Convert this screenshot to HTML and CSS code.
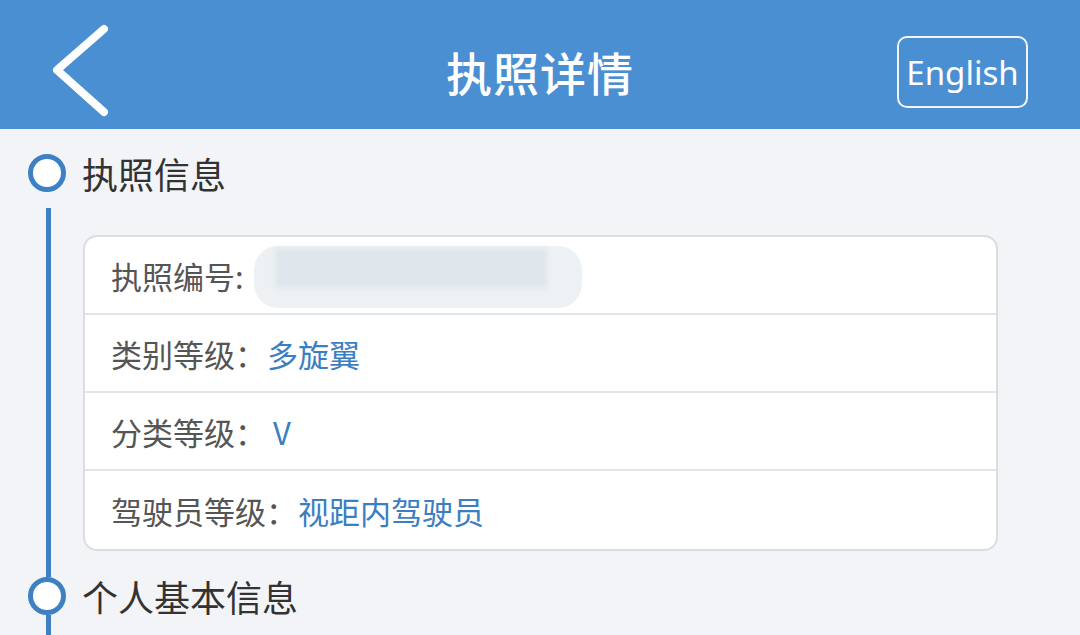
FILE: index.html
```html
<!DOCTYPE html>
<html lang="zh-CN">
<head>
<meta charset="utf-8">
<title>执照详情</title>
<link rel="stylesheet" href="styles.css">
</head>
<body>
<header class="topbar">
  <div class="back">
    <svg width="60" height="96" viewBox="0 0 60 96" aria-hidden="true">
      <polyline points="52,6 5,47 52,89" fill="none" stroke="#ffffff" stroke-width="8" stroke-linecap="round" stroke-linejoin="round"/>
    </svg>
  </div>
  <h1 class="title">执照详情</h1>
  <div class="lang"><span class="lang-btn">English</span></div>
</header>

<main class="timeline">
  <section class="section first">
    <span class="dot"></span>
    <h2 class="sec-title">执照信息</h2>
    <span class="rail"></span>
    <div class="sec-body">
      <div class="card">
        <div class="row"><span class="label">执照编号:</span><span class="masked"><span class="masked-inner"></span></span></div>
        <div class="row"><span class="label">类别等级：</span><span class="value">多旋翼</span></div>
        <div class="row"><span class="label">分类等级：</span><span class="value v">V</span></div>
        <div class="row"><span class="label">驾驶员等级：</span><span class="value">视距内驾驶员</span></div>
      </div>
    </div>
  </section>
  <section class="section second">
    <span class="dot"></span>
    <h2 class="sec-title">个人基本信息</h2>
    <span class="rail"></span>
    <div class="sec-body empty"></div>
  </section>
</main>
</body>
</html>
```

FILE: styles.css
```css
* { box-sizing: border-box; }
html, body { margin: 0; padding: 0; }
body {
  width: 1080px;
  height: 635px;
  overflow: hidden;
  background: #f3f4f7;
  font-family: "Noto Sans CJK SC", "Noto Sans", sans-serif;
  color: #333;
}

.topbar {
  height: 129px;
  background: #4b8fd3;
  display: grid;
  grid-template-columns: 1fr auto 1fr;
  align-items: start;
}
.back {
  padding-left: 52px;
  padding-top: 23px;
}
.back svg { display: block; }
.title {
  margin: 0;
  padding-top: 48px;
  color: #fff;
  font-size: 46px;
  font-weight: 500;
  letter-spacing: 1px;
  line-height: 1;
}
.lang {
  display: flex;
  justify-content: flex-end;
  padding-right: 52px;
  padding-top: 36px;
}
.lang-btn {
  width: 131px;
  height: 72px;
  border: 2px solid rgba(255,255,255,0.92);
  border-radius: 10px;
  color: #fff;
  font-family: "Noto Sans", sans-serif;
  font-size: 33px;
  display: flex;
  align-items: center;
  justify-content: center;
}

.timeline {
  padding-left: 28px;
  padding-top: 25px;
}
.section {
  display: grid;
  grid-template-columns: 38px 1fr;
  column-gap: 16px;
}
.dot {
  grid-column: 1; grid-row: 1;
  width: 38px; height: 38px;
  border: 5px solid #3e80c4;
  border-radius: 50%;
  background: #fff;
  align-self: center;
}
.sec-title {
  grid-column: 2; grid-row: 1;
  margin: 0;
  font-size: 36px;
  font-weight: 400;
  color: #333;
  line-height: 38px;
}
.rail {
  grid-column: 1; grid-row: 2;
  justify-self: center;
  width: 5px;
  margin-left: 2px;
  background: #3e80c4;
}
.first .rail { margin-top: 16px; }
.sec-body {
  grid-column: 2; grid-row: 2;
  padding: 43px 82px 26px 1px;
}
.sec-body.empty { padding: 0; height: 40px; }

.card {
  background: #fff;
  border: 2px solid #dcdde0;
  border-radius: 14px;
  overflow: hidden;
}
.row {
  height: 78px;
  display: flex;
  align-items: center;
  padding-left: 26px;
  font-size: 31px;
  border-top: 2px solid #e3e4e6;
}
.row:first-child { border-top: none; height: 76px; }
.row:last-child { height: 80px; }
.label { color: #555; }
.value { color: #3b7ec2; margin-left: 1px; }
.value.v { margin-left: 7px; }
.masked {
  margin-left: 10px;
  width: 328px;
  height: 62px;
  border-radius: 24px;
  background: #eef1f3;
  display: flex;
  align-items: flex-start;
  padding: 2px 0 0 21px;
  margin-top: 4px;
}
.masked-inner {
  width: 272px;
  height: 40px;
  background: #dfe7ec;
  filter: blur(2px);
}
```
